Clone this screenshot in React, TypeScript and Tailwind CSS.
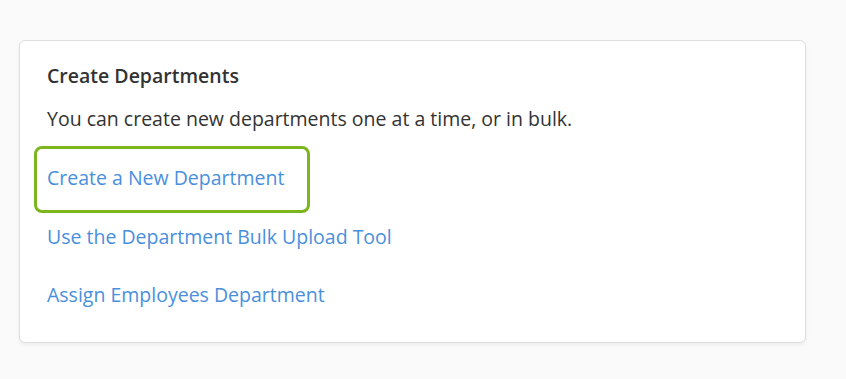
import React from "react";

export default function App() {
  const font = { fontFamily: '"Open Sans", "Noto Sans", sans-serif' };
  return (
    <div className="w-[846px] h-[379px] bg-[#fafafa] pt-[40px] pl-[19px]" style={font}>
      <div className="w-[787px] h-[303px] bg-white border border-[#dedede] rounded-[6px] shadow-[0_2px_4px_rgba(0,0,0,0.06)] pl-[27px] pt-[22px]">
        <h2 className="text-[19.5px] font-semibold text-[#333333] leading-[26px]">Create Departments</h2>
        <p className="mt-[17px] text-[19.5px] text-[#333333] leading-[26px]">
          You can create new departments one at a time, or in bulk.
        </p>
        <div className="flex flex-col mt-[33px] gap-[32.5px]">
          <div className="relative h-[26px]">
            <a className="text-[19.5px] text-[#4a8fdc] leading-[26px]">Create a New Department</a>
            <div className="absolute left-[-13px] top-[-19px] w-[276px] h-[67px] border-[3px] border-[#7db51e] rounded-[8px]"></div>
          </div>
          <a className="text-[19.5px] text-[#4a8fdc] leading-[26px]">Use the Department Bulk Upload Tool</a>
          <a className="text-[19.5px] text-[#4a8fdc] leading-[26px]">Assign Employees Department</a>
        </div>
      </div>
    </div>
  );
}
